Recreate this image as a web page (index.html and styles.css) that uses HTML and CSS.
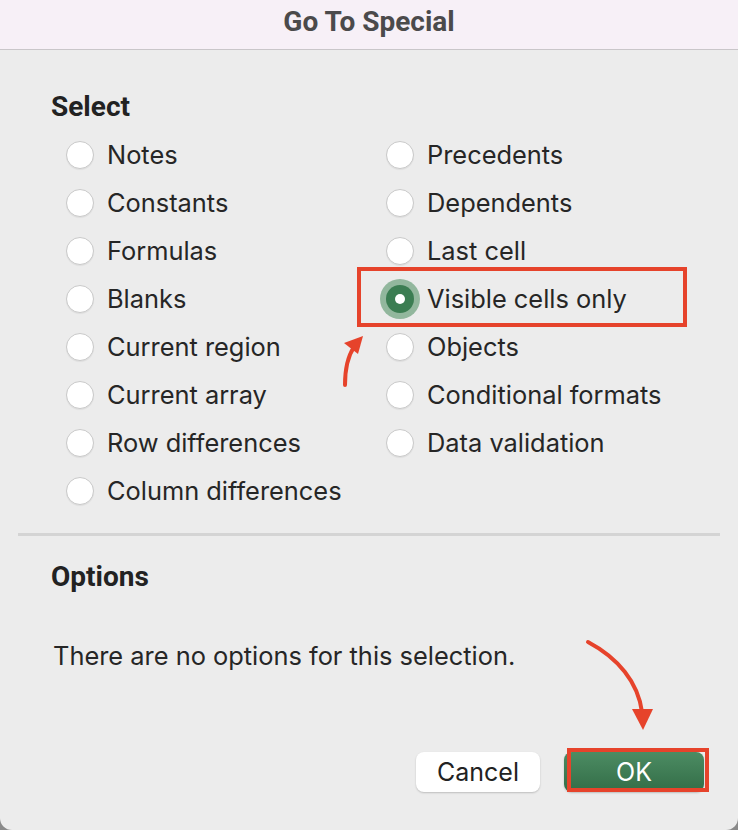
FILE: index.html
```html
<!DOCTYPE html>
<html lang="en">
<head>
    <meta charset="UTF-8">
    <meta name="viewport" content="width=device-width, initial-scale=1.0">
    <title>Go To Special</title>
    <link rel="stylesheet" href="styles.css">
</head>
<body>

<div class="dialog">

<header class="titlebar">
    <h1>Go To Special</h1>
</header>

<section class="select">
    <h2>Select</h2>
    <div class="choices">
        <div class="col">
            <label class="choice"><span class="radio"></span>Notes</label>
            <label class="choice"><span class="radio"></span>Constants</label>
            <label class="choice"><span class="radio"></span>Formulas</label>
            <label class="choice"><span class="radio"></span>Blanks</label>
            <label class="choice"><span class="radio"></span>Current region</label>
            <label class="choice"><span class="radio"></span>Current array</label>
            <label class="choice"><span class="radio"></span>Row differences</label>
            <label class="choice"><span class="radio"></span>Column differences</label>
        </div>
        <div class="col">
            <label class="choice"><span class="radio"></span>Precedents</label>
            <label class="choice"><span class="radio"></span>Dependents</label>
            <label class="choice"><span class="radio"></span>Last cell</label>
            <label class="choice"><span class="radio checked"></span>Visible cells only</label>
            <label class="choice"><span class="radio"></span>Objects</label>
            <label class="choice"><span class="radio"></span>Conditional formats</label>
            <label class="choice"><span class="radio"></span>Data validation</label>
        </div>
    </div>
</section>

<hr class="divider">

<section class="options">
    <h2>Options</h2>
    <p>There are no options for this selection.</p>
</section>

<footer class="actions">
    <button class="cancel">Cancel</button>
    <button class="ok">OK</button>
</footer>

<!-- red annotation marks drawn over the dialog -->
<svg class="marks" width="738" height="830" viewBox="0 0 738 830">
    <rect x="359" y="269" width="326" height="56" fill="none" stroke="#e6432b" stroke-width="4"/>
    <rect x="569" y="750" width="138" height="40" fill="none" stroke="#e6432b" stroke-width="4"/>
    <path d="M345 385 C345 368 348 356 354 347" fill="none" stroke="#e6432b" stroke-width="4" stroke-linecap="round"/>
    <polygon points="363,336 344,343 358,354" fill="#e6432b"/>
    <path d="M588 642 C618 658 638 682 642 712" fill="none" stroke="#e6432b" stroke-width="4" stroke-linecap="round"/>
    <polygon points="632,709 653,709 643,730" fill="#e6432b"/>
</svg>

</div>

</body>
</html>
```

FILE: styles.css
```css
*{
    box-sizing: border-box;
}

html{
    background-color: #8a8a8a;
}

body{
    margin: 0;
    font-family: "Inter", "Noto Sans", sans-serif;
    color: #262626;
}

.dialog{
    position: relative;
    width: 738px;
    height: 830px;
    background-color: #ececec;
    border-radius: 0 0 12px 12px;
    overflow: hidden;
}

.titlebar{
    height: 50px;
    padding-bottom: 6px;
    background-color: #f7f0f7;
    border-bottom: 1px solid #c9c6c9;
    display: flex;
    justify-content: center;
    align-items: center;
}

.titlebar h1{
    margin: 0;
    font-family: "Roboto", sans-serif;
    font-weight: 700;
    font-size: 28px;
    color: #4b4a4b;
}

h2{
    margin: 0;
    font-family: "Roboto", sans-serif;
    font-weight: 700;
    font-size: 28px;
    line-height: 34px;
    color: #222;
}

.select{
    padding: 40px 0 0 51px;
}

.choices{
    display: flex;
    margin-top: 7px;
    padding-left: 15px;
}

.col{
    width: 320px;
    display: flex;
    flex-direction: column;
}

.choice{
    height: 48px;
    display: flex;
    align-items: center;
    gap: 13px;
    font-size: 25.4px;
    line-height: 48px;
}

.radio{
    width: 28px;
    height: 28px;
    border-radius: 50%;
    background-color: white;
    border: 1px solid #c9c9c9;
    box-shadow: 0 1px 1px rgba(0,0,0,0.06);
    flex-shrink: 0;
    display: flex;
    justify-content: center;
    align-items: center;
}

.radio.checked{
    background-color: #3b7d52;
    border: none;
    box-shadow: 0 0 0 6px #92b79d;
}

.radio.checked::after{
    content: '';
    width: 10px;
    height: 10px;
    border-radius: 50%;
    background-color: white;
}

.divider{
    margin: 18px 18px 0 18px;
    border: none;
    height: 3px;
    background-color: #d4d4d4;
}

.options{
    padding: 24px 0 0 51px;
}

.options p{
    margin: 46px 0 0 2px;
    font-size: 25.4px;
    line-height: 32px;
}

.actions{
    display: flex;
    justify-content: flex-end;
    gap: 24px;
    padding: 80px 34px 0 0;
}

button{
    height: 40px;
    border-radius: 8px;
    font-family: "Inter", sans-serif;
    font-size: 25px;
}

.cancel{
    width: 124px;
    background-color: white;
    color: #222;
    border: none;
    box-shadow: 0 1px 2px rgba(0,0,0,0.2);
}

.ok{
    width: 140px;
    color: white;
    border: none;
    background-image: linear-gradient(#4c8c63, #336d47);
    box-shadow: 0 1px 2px rgba(0,0,0,0.2);
}

.marks{
    position: absolute;
    top: 0;
    left: 0;
    pointer-events: none;
}
```
